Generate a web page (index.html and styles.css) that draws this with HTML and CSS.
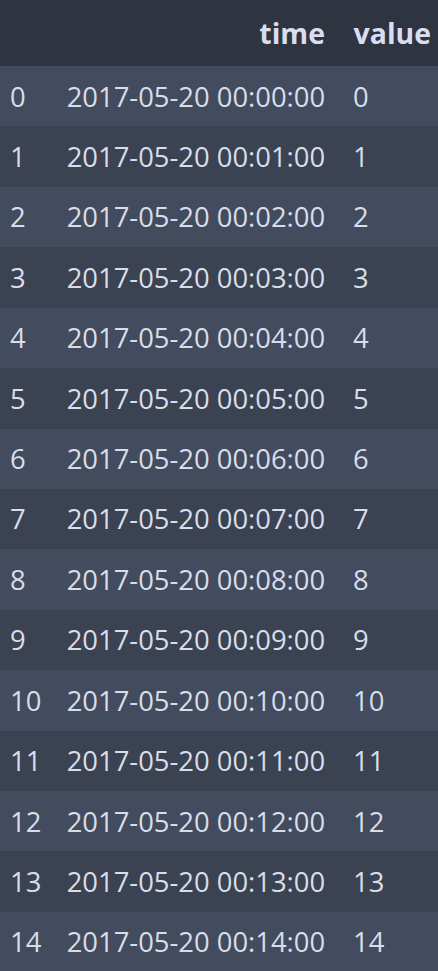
FILE: index.html
```html
<!DOCTYPE html>
<html>
<head>
<meta charset="utf-8">
<link rel="stylesheet" href="styles.css">
</head>
<body>
<table class="df">
  <colgroup>
    <col class="c-idx">
    <col class="c-time">
    <col class="c-val">
  </colgroup>
  <thead>
    <tr><th></th><th class="h-time">time</th><th class="h-val">value</th></tr>
  </thead>
  <tbody>
    <tr><td>0</td><td>2017-05-20 00:00:00</td><td>0</td></tr>
    <tr><td>1</td><td>2017-05-20 00:01:00</td><td>1</td></tr>
    <tr><td>2</td><td>2017-05-20 00:02:00</td><td>2</td></tr>
    <tr><td>3</td><td>2017-05-20 00:03:00</td><td>3</td></tr>
    <tr><td>4</td><td>2017-05-20 00:04:00</td><td>4</td></tr>
    <tr><td>5</td><td>2017-05-20 00:05:00</td><td>5</td></tr>
    <tr><td>6</td><td>2017-05-20 00:06:00</td><td>6</td></tr>
    <tr><td>7</td><td>2017-05-20 00:07:00</td><td>7</td></tr>
    <tr><td>8</td><td>2017-05-20 00:08:00</td><td>8</td></tr>
    <tr><td>9</td><td>2017-05-20 00:09:00</td><td>9</td></tr>
    <tr><td>10</td><td>2017-05-20 00:10:00</td><td>10</td></tr>
    <tr><td>11</td><td>2017-05-20 00:11:00</td><td>11</td></tr>
    <tr><td>12</td><td>2017-05-20 00:12:00</td><td>12</td></tr>
    <tr><td>13</td><td>2017-05-20 00:13:00</td><td>13</td></tr>
    <tr><td>14</td><td>2017-05-20 00:14:00</td><td>14</td></tr>
  </tbody>
</table>
</body>
</html>
```
FILE: styles.css
```css
html, body {
  margin: 0;
  padding: 0;
  background: #3b4252;
  overflow: hidden;
}
.df {
  border-collapse: collapse;
  border-spacing: 0;
  table-layout: fixed;
  width: 438px;
  font-family: "Open Sans", "Noto Sans", sans-serif;
  font-size: 27.4px;
  color: #d8dee9;
}
.c-idx { width: 56px; }
.c-time { width: 287px; }
.c-val { width: 95px; }
.df th, .df td {
  padding: 0 0 0 10px;
  white-space: nowrap;
  text-align: left;
  line-height: 1;
}
.df thead tr {
  height: 66px;
  background: #2e3440;
}
.df th {
  font-weight: 700;
  font-size: 28.4px;
  color: #d8def0;
  vertical-align: bottom;
  padding-bottom: 19px;
}
.df th.h-time { text-align: right; padding-right: 18px; }
.df th.h-val { text-align: right; padding-right: 7px; }
.df tbody tr { height: 60.43px; }
.df tbody tr:nth-child(odd) { background: #434c5e; }
.df tbody tr:nth-child(even) { background: #3b4252; }
.df td:nth-child(2) { padding-left: 10.7px; }
```
